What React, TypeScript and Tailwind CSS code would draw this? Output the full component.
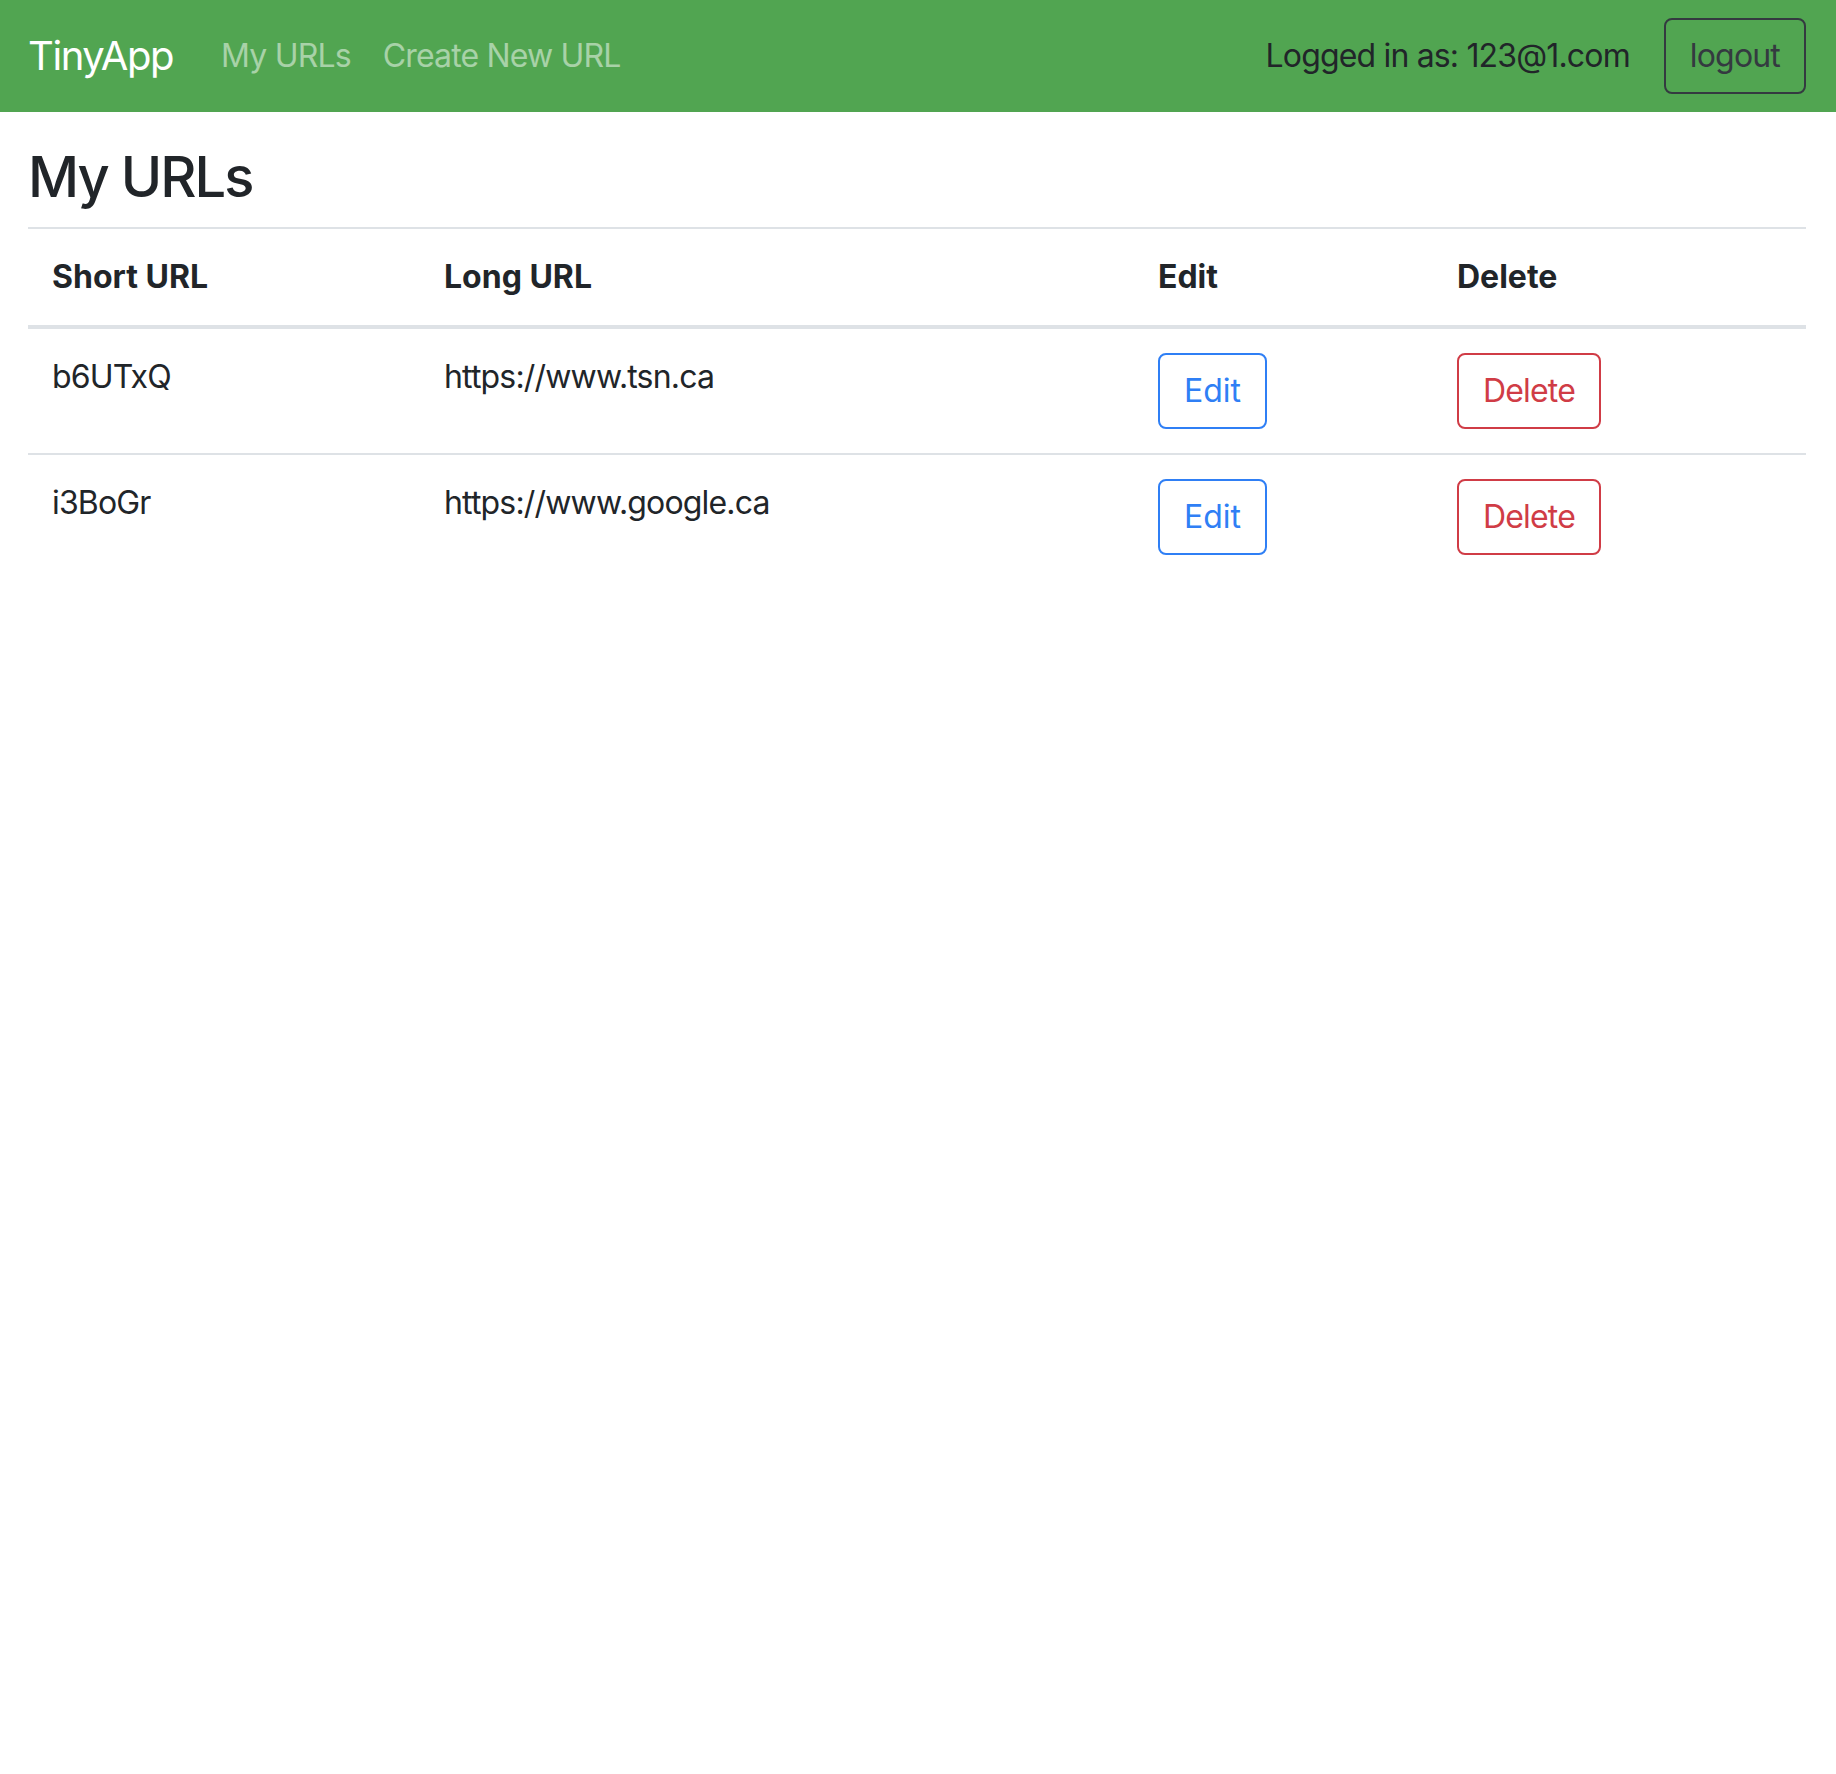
const urls = [
  { short: 'b6UTxQ', long: 'https://www.tsn.ca' },
  { short: 'i3BoGr', long: 'https://www.google.ca' },
];

export default function App() {
  return (
    <div
      className="min-h-screen bg-white text-[32px] leading-[48px] tracking-[-0.026em] text-[#212529]"
      style={{ fontFamily: 'Inter, "Noto Sans", sans-serif' }}
    >
      <nav className="flex items-center bg-[#51a551] pl-[28px] pr-[30px] h-[112px]">
        <a href="#" className="text-[40px] leading-[60px] tracking-[-0.035em] text-white mr-[32px]">
          TinyApp
        </a>
        <a href="#" className="px-[16px] text-white/50">
          My URLs
        </a>
        <a href="#" className="px-[16px] text-white/50">
          Create New URL
        </a>
        <div className="ml-auto flex items-center gap-[34px]">
          <span className="text-[#212529]">Logged in as: 123@1.com</span>
          <button className="border-2 border-[#343a40] rounded-lg px-[24px] py-[12px] text-[#343a40]">
            logout
          </button>
        </div>
      </nav>

      <main className="pl-[28px] pr-[30px] pt-[32px]">
        <h3 className="text-[56px] leading-[67px] tracking-[-0.035em] font-medium mb-[16px]">My URLs</h3>
        <table className="w-full table-fixed border-collapse">
          <colgroup>
            <col className="w-[392px]" />
            <col className="w-[714px]" />
            <col className="w-[299px]" />
            <col />
          </colgroup>
          <thead>
            <tr className="tracking-normal">
              <th className="text-left font-bold align-bottom p-[24px] border-t-2 border-b-4 border-[#dee2e6]">Short URL</th>
              <th className="text-left font-bold align-bottom p-[24px] border-t-2 border-b-4 border-[#dee2e6]">Long URL</th>
              <th className="text-left font-bold align-bottom p-[24px] border-t-2 border-b-4 border-[#dee2e6]">Edit</th>
              <th className="text-left font-bold align-bottom p-[24px] border-t-2 border-b-4 border-[#dee2e6]">Delete</th>
            </tr>
          </thead>
          <tbody>
            {urls.map((u) => (
              <tr key={u.short}>
                <td className="align-top p-[24px] border-t-2 border-[#dee2e6]">{u.short}</td>
                <td className="align-top p-[24px] border-t-2 border-[#dee2e6]">{u.long}</td>
                <td className="align-top p-[24px] border-t-2 border-[#dee2e6]">
                  <button className="border-2 border-[#2f7ff5] rounded-lg px-[24px] py-[12px] tracking-normal text-[#2f7ff5]">
                    Edit
                  </button>
                </td>
                <td className="align-top p-[24px] border-t-2 border-[#dee2e6]">
                  <button className="border-2 border-[#d03c46] rounded-lg px-[24px] py-[12px] text-[#d03c46]">
                    Delete
                  </button>
                </td>
              </tr>
            ))}
          </tbody>
        </table>
      </main>
    </div>
  );
}
